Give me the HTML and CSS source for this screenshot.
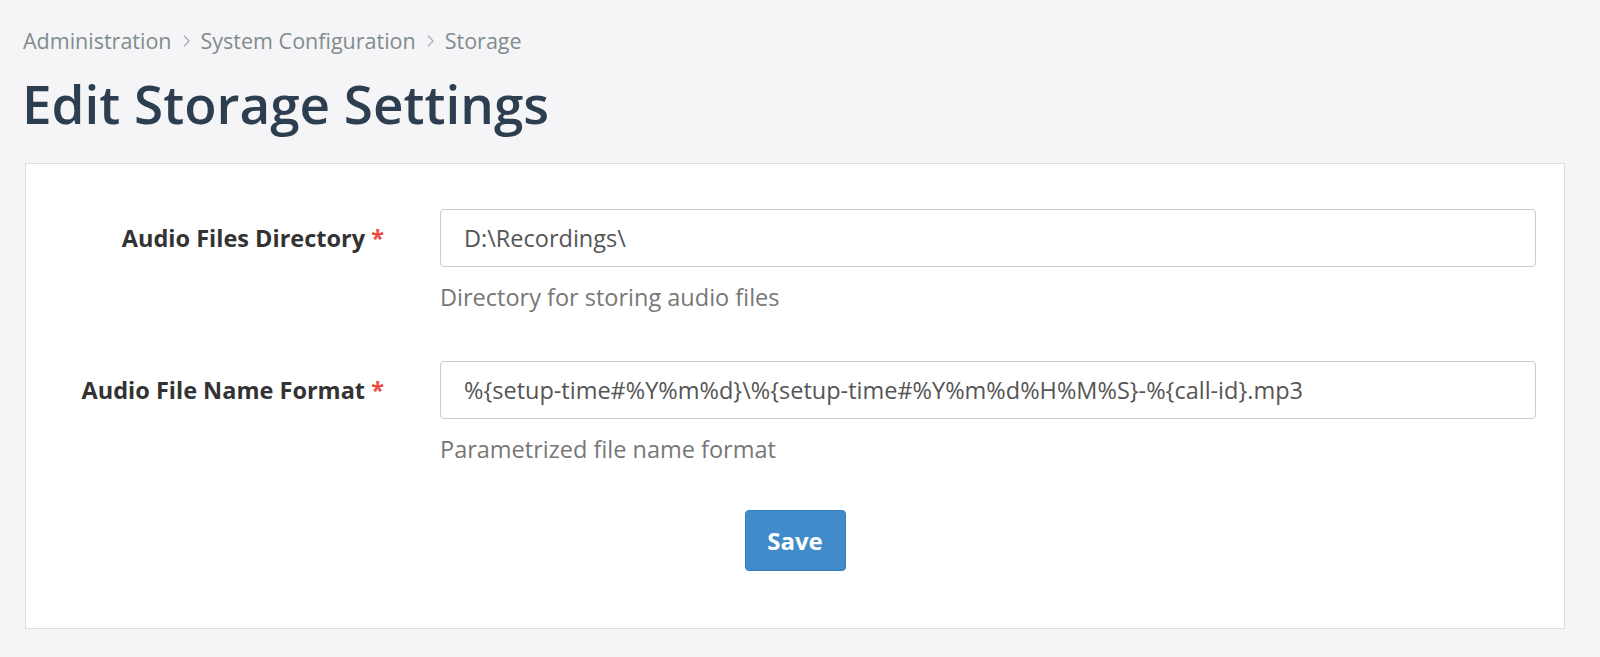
FILE: index.html
```html
<!DOCTYPE html>
<html lang="en">
<head>
    <meta charset="UTF-8">
    <meta name="viewport" content="width=device-width, initial-scale=1.0">
    <title>Edit Storage Settings</title>
    <link rel="stylesheet" href="styles.css">
</head>
<body>
    <div class="page">
        <nav class="breadcrumb">
            <span>Administration</span>
            <svg class="sep" viewBox="0 0 10 16" width="9" height="14"><path d="M2 2l6 6-6 6" fill="none" stroke="currentColor" stroke-width="1.4"/></svg>
            <span>System Configuration</span>
            <svg class="sep" viewBox="0 0 10 16" width="9" height="14"><path d="M2 2l6 6-6 6" fill="none" stroke="currentColor" stroke-width="1.4"/></svg>
            <span>Storage</span>
        </nav>
        <h1>Edit Storage Settings</h1>
        <form class="panel" id="storageForm">
            <div class="form-row">
                <label for="audioDir">Audio Files Directory <span class="req">*</span></label>
                <div class="field">
                    <input type="text" id="audioDir" name="audioDir" value="D:\Recordings\">
                    <p class="help">Directory for storing audio files</p>
                </div>
            </div>
            <div class="form-row">
                <label for="nameFormat">Audio File Name Format <span class="req">*</span></label>
                <div class="field">
                    <input type="text" id="nameFormat" name="nameFormat" value="%{setup-time#%Y%m%d}\%{setup-time#%Y%m%d%H%M%S}-%{call-id}.mp3">
                    <p class="help">Parametrized file name format</p>
                </div>
            </div>
            <div class="actions">
                <button type="button">Save</button>
            </div>
        </form>
    </div>
</body>
</html>
```

FILE: styles.css
```css
body { margin: 0; background: #f5f5f7; font-family: "Open Sans", "Liberation Sans", sans-serif; color: #333; }
.page { padding: 26px 35px 0 25px; }
.breadcrumb { font-size: 21.5px; line-height: 30px; color: #7f8c8d; display: flex; align-items: center; gap: 10px; margin-left: -2px; }
.breadcrumb .sep { color: #a5adb2; }
h1 { font-size: 53px; font-weight: 600; color: #2c3e50; margin: 16px 0 27px -3px; line-height: 64px; }
.panel { background: #fff; border: 1px solid #ddd; padding: 45px 28px 57px 28px; }
.form-row { display: grid; grid-template-columns: 330px 1fr; column-gap: 56px; margin-bottom: 48px; }
.form-row label { text-align: right; font-weight: 700; font-size: 23.5px; line-height: 58px; color: #333; }
.req { color: #e74c3c; }
.field input { width: 100%; box-sizing: border-box; height: 58px; border: 1px solid #ccc; border-radius: 4px; padding: 0 23px; font-family: inherit; font-size: 23.5px; color: #555; }
.help { margin: 0; padding-top: 14px; font-size: 23.5px; line-height: 32px; color: #777; }
.actions { text-align: center; margin-top: -3px; }
button { background: #428bca; border: 1px solid #357ebd; border-radius: 4px; color: #fff; font-family: inherit; font-weight: 700; font-size: 24px; width: 101px; height: 61px; }
```
